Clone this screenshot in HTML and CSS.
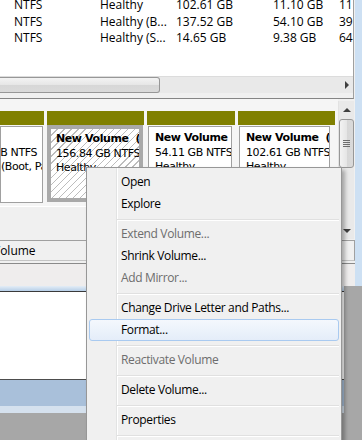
FILE: index.html
```html
<!DOCTYPE html>
<html lang="en">
<head>
  <meta charset="UTF-8">
  <title>Disk Management</title>
  <link rel="stylesheet" href="styles.css">
</head>
<body>
<div class="screen">
  <div class="top">
    <div class="win">
      <div class="list">
        <div class="rows">
          <div class="row"><span>NTFS</span><span>Healthy</span><span>102.61 GB</span><span>11.10 GB</span><span>11</span></div>
          <div class="row"><span>NTFS</span><span>Healthy (B...</span><span>137.52 GB</span><span>54.10 GB</span><span>39</span></div>
          <div class="row"><span>NTFS</span><span>Healthy (S...</span><span>14.65 GB</span><span>9.38 GB</span><span>64</span></div>
        </div>
        <div class="hscroll">
          <div class="hthumb"></div>
          <div class="htrack"><span class="arrow-r"></span></div>
        </div>
      </div>

      <div class="graph">
        <div class="disk-area">
          <div class="diskrow">
            <div class="part p1">
              <div class="olive"></div>
              <div class="box"><div class="shift">
                <div class="title">(C:)</div>
                <div>137.52 GB NTFS</div>
                <div class="back">Healthy (Boot, Page File, Crash Dump, Primary Partition)</div>
              </div></div>
            </div>
            <div class="part p2">
              <div class="olive"></div>
              <div class="box sel">
                <div class="title">New Volume&nbsp; (F:)</div>
                <div>156.84 GB NTFS</div>
                <div>Healthy</div>
              </div>
            </div>
            <div class="part p3">
              <div class="olive"></div>
              <div class="box">
                <div class="title">New Volume&nbsp; (E:)</div>
                <div>54.11 GB NTFS</div>
                <div>Healthy</div>
              </div>
            </div>
            <div class="part p4">
              <div class="olive"></div>
              <div class="box">
                <div class="title">New Volume&nbsp; (D:)</div>
                <div>102.61 GB NTFS</div>
                <div>Healthy</div>
              </div>
            </div>
          </div>
          <div class="blank"></div>
        </div>
        <div class="vscroll">
          <div class="vbtn"><span class="arrow-u"></span></div>
          <div class="vthumb"><span class="grip"></span></div>
          <div class="vtrack"></div>
          <div class="vbtn"><span class="arrow-d"></span></div>
        </div>
      </div>

      <div class="legend"><span>Volume</span></div>
      <div class="status"></div>
    </div>
    <div class="frame"></div>
  </div>

  <div class="bottom">
    <div class="lower">
      <div class="lower-top"></div>
      <div class="lower-body"></div>
      <div class="lower-bar"></div>
      <div class="lower-bar2"></div>
    </div>
  </div>

  <div class="menu">
    <div class="item">Open</div>
    <div class="item">Explore</div>
    <div class="sep"></div>
    <div class="item off">Extend Volume...</div>
    <div class="item">Shrink Volume...</div>
    <div class="item off">Add Mirror...</div>
    <div class="sep"></div>
    <div class="item">Change Drive Letter and Paths...</div>
    <div class="item hover">Format...</div>
    <div class="sep"></div>
    <div class="item off">Reactivate Volume</div>
    <div class="sep"></div>
    <div class="item">Delete Volume...</div>
    <div class="sep"></div>
    <div class="item">Properties</div>
    <div class="sep"></div>
    <div class="item">Help</div>
  </div>
</div>
</body>
</html>
```

FILE: styles.css
```css
* {
  box-sizing: border-box;
}

body {
  margin: 0;
  background: #a7a7a7;
  font-family: "Open Sans", "Noto Sans", sans-serif;
  font-size: 12px;
  color: #000;
}

.screen {
  position: relative;
  width: 362px;
  height: 440px;
  overflow: hidden;
}

.top {
  display: flex;
  height: 286px;
}

.win {
  width: 355px;
  display: flex;
  flex-direction: column;
  background: #f0f0f0;
}

.frame {
  flex: 1;
  background: #cde0f3;
}

/* volume list */
.list {
  width: 354px;
  height: 99px;
  border-right: 1px solid #a0a0a0;
  border-bottom: 1px solid #858585;
  background: #f0f0f0;
}

.rows {
  height: 76px;
  background: #fff;
  overflow: hidden;
}

.row {
  display: grid;
  grid-template-columns: 86px 76px 97px 66px 1fr;
  padding-left: 14px;
  line-height: 16.5px;
  white-space: nowrap;
}

.row:first-child {
  margin-top: -3px;
}

.hscroll {
  display: flex;
  height: 17px;
  background: #e9e9e9;
  border-top: 1px solid #dcdcdc;
}

.hthumb {
  width: 160px;
  border: 1px solid #979797;
  border-left: 0;
  border-radius: 0 3px 3px 0;
  background: linear-gradient(#f3f3f3, #e6e6e6 50%, #d7d7d7 51%, #dadada);
}

.htrack {
  flex: 1;
  display: flex;
  justify-content: flex-end;
  align-items: center;
  padding-right: 4px;
}

.arrow-r {
  border-left: 4px solid #404040;
  border-top: 4px solid transparent;
  border-bottom: 4px solid transparent;
}

/* graphical view */
.graph {
  display: flex;
  height: 141px;
}

.disk-area {
  width: 338px;
  display: flex;
  flex-direction: column;
}

.diskrow {
  height: 108px;
  display: flex;
  gap: 3px;
  padding-top: 12px;
  background: #f5f5f5;
  border-bottom: 1px solid #fff;
}

.blank {
  flex: 1;
  background: #f0f0f0;
}

.p1 { width: 44px; }
.p2 { width: 97px; }
.p3 { width: 88px; }
.p4 { width: 97px; }

.olive {
  height: 14px;
  background: #808000;
}

.box {
  height: 77px;
  margin: 1px 1px 0 1px;
  padding: 4px 0 0 6px;
  border: 1px solid #a0a0a0;
  background: #fff;
  overflow: hidden;
  white-space: nowrap;
  font-family: "DejaVu Sans", sans-serif;
  font-size: 11px;
  letter-spacing: -0.4px;
  line-height: 14.5px;
}

.title {
  font-weight: bold;
}

.p1 .box {
  margin-left: 0;
  padding-left: 0;
}

.shift {
  margin-left: -48px;
}

.shift .back {
  margin-left: 5px;
}

.p2 .box {
  margin: 0 1px 0 0;
  padding: 3px 0 0 5px;
  border: 4px solid #a9a9a9;
  background: repeating-linear-gradient(135deg, #fff 0 4px, #bdbdbd 4px 5px);
}

.p3 .box {
  margin-right: 3px;
}

.p4 .box {
  margin-right: 5px;
}

.vscroll {
  width: 16px;
  margin: 2px 1px 1px 0;
  display: flex;
  flex-direction: column;
  background: #e9e9e9;
  border-left: 1px solid #e2e2e2;
}

.vbtn {
  height: 17px;
  display: flex;
  align-items: center;
  justify-content: center;
}

.arrow-u {
  border-bottom: 4px solid #404040;
  border-left: 4px solid transparent;
  border-right: 4px solid transparent;
}

.arrow-d {
  border-top: 4px solid #404040;
  border-left: 4px solid transparent;
  border-right: 4px solid transparent;
}

.vthumb {
  height: 49px;
  margin-top: 1px;
  border: 1px solid #979797;
  border-radius: 3px;
  background: linear-gradient(to right, #f3f3f3, #e6e6e6 50%, #d7d7d7 51%, #dadada);
  display: flex;
  align-items: center;
  justify-content: center;
}

.grip {
  width: 7px;
  height: 7px;
  background: repeating-linear-gradient(#6e6e6e 0 1px, transparent 1px 2px);
}

.vtrack {
  flex: 1;
}

.legend {
  height: 21px;
  padding-top: 1px;
  line-height: 18px;
  border-top: 1px solid #a0a0a0;
  border-bottom: 1px solid #c4c4c4;
  border-right: 1px solid #a0a0a0;
  white-space: nowrap;
  overflow: hidden;
}

.legend span {
  margin-left: -7px;
}

.status {
  height: 23px;
  margin-top: 2px;
  border-top: 1px solid #8a8a8a;
  background: #efeded;
}

/* window underneath */
.bottom {
  display: flex;
  height: 154px;
}

.lower {
  width: 344px;
  display: flex;
  flex-direction: column;
}

.lower-top {
  height: 6px;
  background: linear-gradient(#e4edf6, #b7cfe8);
  border-bottom: 1px solid #3a3a3a;
}

.lower-body {
  height: 88px;
  background: #fff;
  border-bottom: 1px solid #4d4d4d;
}

.lower-bar {
  height: 26px;
  background: #a9c0da;
}

.lower-bar2 {
  height: 7px;
  background: #d5e1ee;
}

/* context menu */
.menu {
  position: absolute;
  left: 86px;
  top: 167px;
  width: 256px;
  height: 300px;
  padding: 3px 2px;
  border: 1px solid #979797;
  background: linear-gradient(to right, #f0f0f0 0 29px, #e2e3e3 29px 30px, #fff 30px 31px, #f0f0f0 31px);
  box-shadow: 3px 3px 4px rgba(0, 0, 0, 0.3);
  letter-spacing: -0.35px;
}

.item {
  height: 22px;
  line-height: 20px;
  padding-left: 31px;
  border: 1px solid transparent;
  border-radius: 3px;
  white-space: nowrap;
}

.item.off {
  color: #6d6d6d;
}

.item.hover {
  border-color: #a9caf0;
  background: linear-gradient(#f4f8fd, #e4edf9);
}

.sep {
  height: 8px;
  margin-left: 28px;
  padding-top: 4px;
}

.sep::before {
  content: "";
  display: block;
  border-top: 1px solid #e0e0e0;
  border-bottom: 1px solid #fff;
}
```
